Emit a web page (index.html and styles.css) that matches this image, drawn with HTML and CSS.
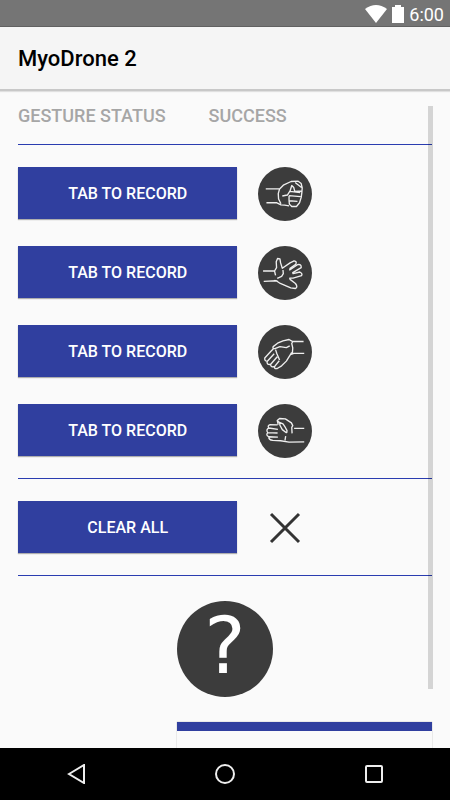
FILE: index.html
```
<!DOCTYPE html>
<html lang="en">
<head>
    <meta charset="UTF-8">
    <meta name="viewport" content="width=device-width, initial-scale=1.0">
    <title>MyoDrone 2</title>
    <link rel="stylesheet" href="styles.css">
</head>
<body>
    <div class="status-bar">
        <svg width="22" height="18" viewBox="0 0 22 18"><path d="M0 4 Q11 -4 22 4 L11 18 Z"/></svg>
        <svg width="12" height="18" viewBox="0 0 12 18"><path d="M3 0 H9 V2 H12 V18 H0 V2 H3 Z"/></svg>
        <span>6:00</span>
    </div>

    <header class="toolbar">
        <h1>MyoDrone 2</h1>
    </header>

    <main class="content">
        <div class="labels">
            <span>GESTURE STATUS</span>
            <span>SUCCESS</span>
        </div>

        <div class="section">
            <div class="row">
                <button class="btn">TAB TO RECORD</button>
                <svg class="gesture" viewBox="24 21 160 160">
                    <circle cx="104" cy="101" r="80"/>
                    <path d="M47 86 H88 M49 127 H80 L92 133 L103 134 L116 136 M88 86 L84 100 L85 116 L92 130 M88 86 L99 75 L122 64 L143 63 L152 70 L155 83 L154 96 L152 111 L147 127 L138 138 L124 138 L117 131 L116 121 M96 107 L111 104 L119 92 L124 76 L130 82 L133 93 M119 93 L149 97 M116 106 L150 109 M116 106 L116 121 L141 123 M133 93 L154 92 M134 67 L153 82"/>
                </svg>
            </div>
            <div class="row">
                <button class="btn">TAB TO RECORD</button>
                <svg class="gesture" viewBox="24 16 160 160">
                    <circle cx="104" cy="96" r="80"/>
                    <path d="M39 90 H73 L79 80 L78 63 L82 53 L89 54 L91 66 L96 82 L119 66 L131 60 Q140 61 136 70 L119 82 L118 87 L142 71 Q153 69 152 80 L127 95 L128 98 L148 93 Q157 98 153 104 L128 111 L118 111 L119 115 L135 127 Q143 137 135 142 L121 140 L90 127 L78 119 L41 121 M73 90 L76 103 M98 87 L99 98 L94 106 L81 112 M73 118 L82 120"/>
                </svg>
            </div>
            <div class="row">
                <button class="btn">TAB TO RECORD</button>
                <svg class="gesture" viewBox="24 13 160 160">
                    <circle cx="104" cy="93" r="80"/>
                    <path d="M159 62 H127 L116 56 L98 60 L82 67 L69 77 Q66 84 74 83 L89 77 L108 80 L118 75 M127 62 L124 68 L127 81 L126 94 L120 98 M161 97 H130 L120 101 L108 120 L94 134 L81 142 Q70 144 74 135 L87 119 M74 136 Q62 140 61 130 L81 107 M61 130 Q49 131 51 121 L72 98 M51 120 Q43 120 44 111 L63 90 L69 84 M76 86 L80 98 L88 117"/>
                </svg>
            </div>
            <div class="row">
                <button class="btn">TAB TO RECORD</button>
                <svg class="gesture" viewBox="24 15 160 160">
                    <circle cx="104" cy="95" r="80"/>
                    <path d="M161 87 H131 M125 102 L124 84 L127 79 L123 71 L105 59 L88 58 L81 64 L86 69 L98 74 L103 81 M88 69 L89 78 L96 91 L109 101 M103 81 L110 94 L109 101 M81 64 L84 76 M82 77 L60 76 Q51 80 56 86 L83 90 M57 86 Q46 91 53 100 L82 101 M53 100 Q46 107 56 112 L83 113 M56 112 Q55 121 68 123 L91 124 L116 128 L161 127 M106 110 L104 123"/>
                </svg>
            </div>
        </div>

        <div class="section">
            <div class="row">
                <button class="btn">CLEAR ALL</button>
                <svg class="clear" viewBox="0 0 54 54"><path d="M13 13 L41 41 M41 13 L13 41"/></svg>
            </div>
        </div>

        <div class="help">
            <button class="help-btn">?</button>
            <div class="card"></div>
        </div>
    </main>

    <nav class="nav-bar">
        <button aria-label="Back"><svg width="20" height="20" viewBox="0 0 20 20"><path d="M2 10 L17 1 V19 Z"/></svg></button>
        <button aria-label="Home"><svg width="20" height="20" viewBox="0 0 20 20"><circle cx="10" cy="10" r="9"/></svg></button>
        <button aria-label="Recent apps"><svg width="20" height="20" viewBox="0 0 20 20"><rect x="2" y="2" width="16" height="16" rx="1"/></svg></button>
    </nav>
</body>
</html>
```
FILE: styles.css
```
* {
    box-sizing: border-box;
}
body {
    margin: 0;
    height: 100vh;
    display: flex;
    flex-direction: column;
    font-family: Roboto, sans-serif;
    background-color: #fafafa;
}
svg {
    display: block;
}
button {
    border: none;
    padding: 0;
    font: inherit;
    cursor: pointer;
}
.status-bar {
    flex: none;
    height: 27px;
    display: flex;
    align-items: center;
    justify-content: flex-end;
    gap: 5px;
    padding: 2px 6px 0;
    font-size: 18px;
    color: #fff;
    background-color: #757575;
    border-bottom: 1px solid #616161;
}
.status-bar svg {
    fill: #fff;
}
.toolbar {
    flex: none;
    height: 64px;
    display: flex;
    align-items: center;
    padding: 0 18px;
    background-color: #f5f5f5;
    border-bottom: 2px solid #c8c8c8;
    box-shadow: 0 1px 1px rgba(0, 0, 0, 0.1);
}
.toolbar h1 {
    margin: 0;
    font-size: 22px;
    font-weight: 500;
    color: #000;
}
.content {
    flex: 1;
    min-height: 0;
    position: relative;
    overflow: hidden;
    padding: 15px 18px 0;
}
/* scroll indicator */
.content::after {
    content: "";
    position: absolute;
    top: 15px;
    right: 17px;
    bottom: 59px;
    width: 5px;
    background-color: rgba(0, 0, 0, 0.15);
}
.labels {
    display: flex;
    gap: 43px;
    height: 39px;
    font-size: 18px;
    line-height: 20px;
    font-weight: 500;
    color: #a6a6a6;
    border-bottom: 1px solid #2a3cb0;
}
.section {
    display: flex;
    flex-direction: column;
    gap: 25px;
    padding: 22px 0 20px;
    border-bottom: 1px solid #2a3cb0;
}
.row {
    display: flex;
    gap: 21px;
}
.btn {
    width: 53%;
    height: 52px;
    font-size: 16px;
    font-weight: 500;
    color: #fff;
    background-color: #303f9f;
    box-shadow: 0 1px 1px rgba(0, 0, 0, 0.3);
}
.gesture,
.clear {
    width: 54px;
    height: 54px;
    fill: none;
    stroke: #eee;
    stroke-width: 4;
    stroke-linejoin: round;
}
.gesture circle {
    fill: #3c3c3c;
    stroke: none;
}
.clear {
    stroke: #333;
    stroke-width: 3;
}
.help {
    display: grid;
    grid-template-columns: 159px 1fr;
    row-gap: 25px;
    padding-top: 25px;
}
.help-btn,
.card {
    grid-column: 2;
}
.help-btn {
    width: 96px;
    height: 96px;
    padding-bottom: 6px;
    border-radius: 50%;
    font-family: "DejaVu Sans", sans-serif;
    font-size: 78px;
    line-height: 90px;
    color: #fff;
    background-color: #3c3c3c;
}
.card {
    height: 120px;
    border-top: 9px solid #303f9f;
    box-shadow: 0 0 1px rgba(0, 0, 0, 0.4);
}
.nav-bar {
    flex: none;
    height: 52px;
    display: flex;
    justify-content: center;
    background-color: #000;
}
.nav-bar button {
    width: 33%;
    display: flex;
    align-items: center;
    justify-content: center;
    background: none;
}
.nav-bar svg {
    fill: none;
    stroke: #eee;
    stroke-width: 2;
}
```
